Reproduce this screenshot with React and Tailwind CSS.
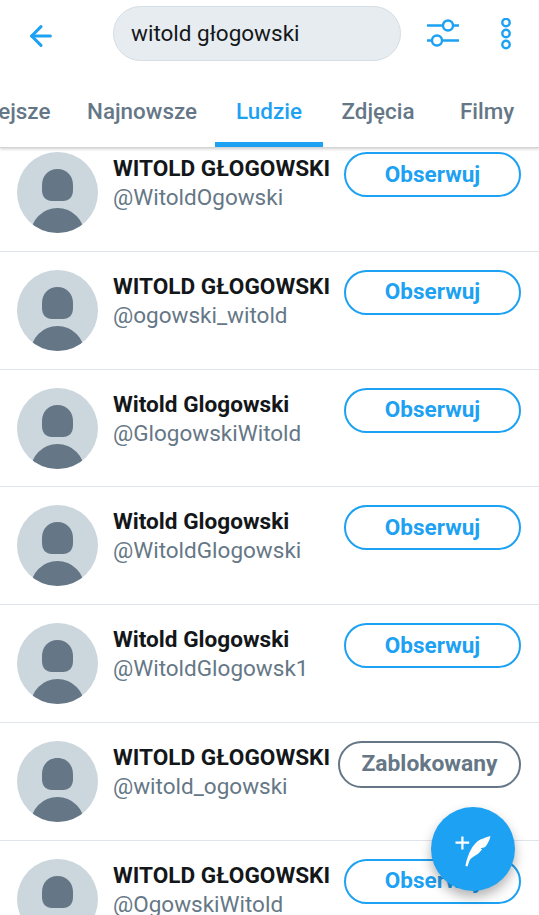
import React from 'react'
import { ArrowLeft } from 'lucide-react'

const font = { fontFamily: 'Roboto, sans-serif' }

const users = [
  { name: 'WITOLD GŁOGOWSKI', handle: '@WitoldOgowski' },
  { name: 'WITOLD GŁOGOWSKI', handle: '@ogowski_witold' },
  { name: 'Witold Glogowski', handle: '@GlogowskiWitold' },
  { name: 'Witold Glogowski', handle: '@WitoldGlogowski' },
  { name: 'Witold Glogowski', handle: '@WitoldGlogowsk1' },
  { name: 'WITOLD GŁOGOWSKI', handle: '@witold_ogowski', blocked: true },
  { name: 'WITOLD GŁOGOWSKI', handle: '@OgowskiWitold' },
]

function Avatar() {
  return (
    <svg viewBox="0 0 81 81" className="w-[81px] h-[81px] shrink-0">
      <defs>
        <clipPath id="avatar-clip">
          <circle cx="40.5" cy="40.5" r="40.5" />
        </clipPath>
      </defs>
      <circle cx="40.5" cy="40.5" r="40.5" fill="#ccd6dd" />
      <g clipPath="url(#avatar-clip)" fill="#657786">
        <path d="M40.5 17C50 17 56 24 56 33V38C56 45 52 49 46 49H35C29 49 25 45 25 38V33C25 24 31 17 40.5 17z" />
        <circle cx="40.5" cy="83" r="27" />
      </g>
    </svg>
  )
}

function Row({ user }) {
  return (
    <div className="h-[117.8px] shrink-0 border-b border-[#dfe5ea] flex items-start pl-[17px] pr-[18px] pt-[18px]">
      <Avatar />
      <div className="ml-[15px] flex-1 min-w-0">
        <div className="text-[22.6px] leading-[30px] font-bold text-[#14171a] whitespace-nowrap pt-[2px]">{user.name}</div>
        <div className="text-[22.5px] leading-[27px] text-[#657786] whitespace-nowrap">{user.handle}</div>
      </div>
      {user.blocked ? (
        <div className="w-[183px] h-[47px] shrink-0 rounded-full border-2 border-[#657786] flex items-center justify-center text-[22.8px] font-bold text-[#657786]">
          Zablokowany
        </div>
      ) : (
        <div className="w-[177px] h-[45px] shrink-0 rounded-full border-2 border-[#1da1f2] flex items-center justify-center text-[22.5px] font-bold text-[#1da1f2]">
          Obserwuj
        </div>
      )}
    </div>
  )
}

export default function App() {
  return (
    <div style={font} className="relative h-[915px] w-[539px] overflow-hidden bg-white flex flex-col">
      {/* Header */}
      <div className="relative z-10 h-[148px] shrink-0 bg-white border-b border-[#d4d4d4] shadow-[0_1px_3px_rgba(0,0,0,0.2)]">
        <div className="flex items-center h-[67px]">
          <div className="w-[113px] pl-[25px] pt-[5px] shrink-0">
            <ArrowLeft size={32} strokeWidth={2.3} className="text-[#1da1f2]" />
          </div>
          <div className="w-[288px] h-[55px] shrink-0 rounded-full bg-[#e6ecf0] border border-[#d5dee5] flex items-center pl-[17px] text-[22.5px] text-[#14171a]">
            witold głogowski
          </div>
          <svg viewBox="0 0 34 30" className="ml-[25px] w-[34px] h-[30px] shrink-0" fill="none" stroke="#1da1f2" strokeWidth="2.4">
            <path d="M1 6.500h16M27.500 6.500h5.500M1 21.500h5M16 21.500h17" />
            <circle cx="22" cy="6.500" r="5" />
            <circle cx="11" cy="21.500" r="5" />
          </svg>
          <svg viewBox="0 0 12 32" className="ml-[40px] w-[12px] h-[32px] shrink-0" fill="none" stroke="#1da1f2" strokeWidth="2.4">
            <circle cx="6" cy="4.500" r="3.700" />
            <circle cx="6" cy="15.500" r="3.700" />
            <circle cx="6" cy="26.500" r="3.700" />
          </svg>
        </div>
        <div className="flex h-[80px] text-[22.4px] font-medium text-[#657786] whitespace-nowrap -ml-[112px]">
          <div className="w-[181px] shrink-0 flex items-center justify-center pt-[10px]">Najważniejsze</div>
          <div className="w-[146px] shrink-0 flex items-center justify-center pt-[10px]">Najnowsze</div>
          <div className="w-[108px] shrink-0 flex items-center justify-center pt-[15px] text-[#1da1f2] border-b-[5px] border-[#1da1f2]">Ludzie</div>
          <div className="w-[110px] shrink-0 flex items-center justify-center pt-[10px]">Zdjęcia</div>
          <div className="w-[108px] shrink-0 flex items-center justify-center pt-[10px]">Filmy</div>
        </div>
      </div>

      {/* Scrolled list */}
      <div className="flex flex-col -mt-[14px]">
        {users.map((user, i) => (
          <Row key={i} user={user} />
        ))}
      </div>

      {/* Compose button */}
      <div className="absolute z-20 left-[431px] top-[807px] w-[84px] h-[84px] rounded-full bg-[#1da1f2] shadow-[0_6px_12px_rgba(0,0,0,0.3)]">
        <svg viewBox="0 0 84 84" className="w-[84px] h-[84px]" fill="#fff">
          <path d="M30.300 29.500h2.200v5.100h5.700v2.200h-5.700v5.700h-2.200v-5.700h-5.800v-2.200h5.800z" />
          <path d="M34.500 59C35 55 36 52 37.300 48.500C38.800 44.500 40.500 41 43 38C45 35.500 47.500 33.500 50 32.300C53 31 56 30 59.500 29C59 31 58.500 32.800 57.500 34.700C56.500 36.800 55.500 38.500 54 40C52.500 40.800 51 41 49.500 41C50 41.600 50.500 42 51.200 42.200C49 45 46.500 47.500 43.500 49C41.500 50.200 39.800 51.500 38.600 53.500C37.800 55.500 37 57.500 36.500 59.500z" />
        </svg>
      </div>
    </div>
  )
}
